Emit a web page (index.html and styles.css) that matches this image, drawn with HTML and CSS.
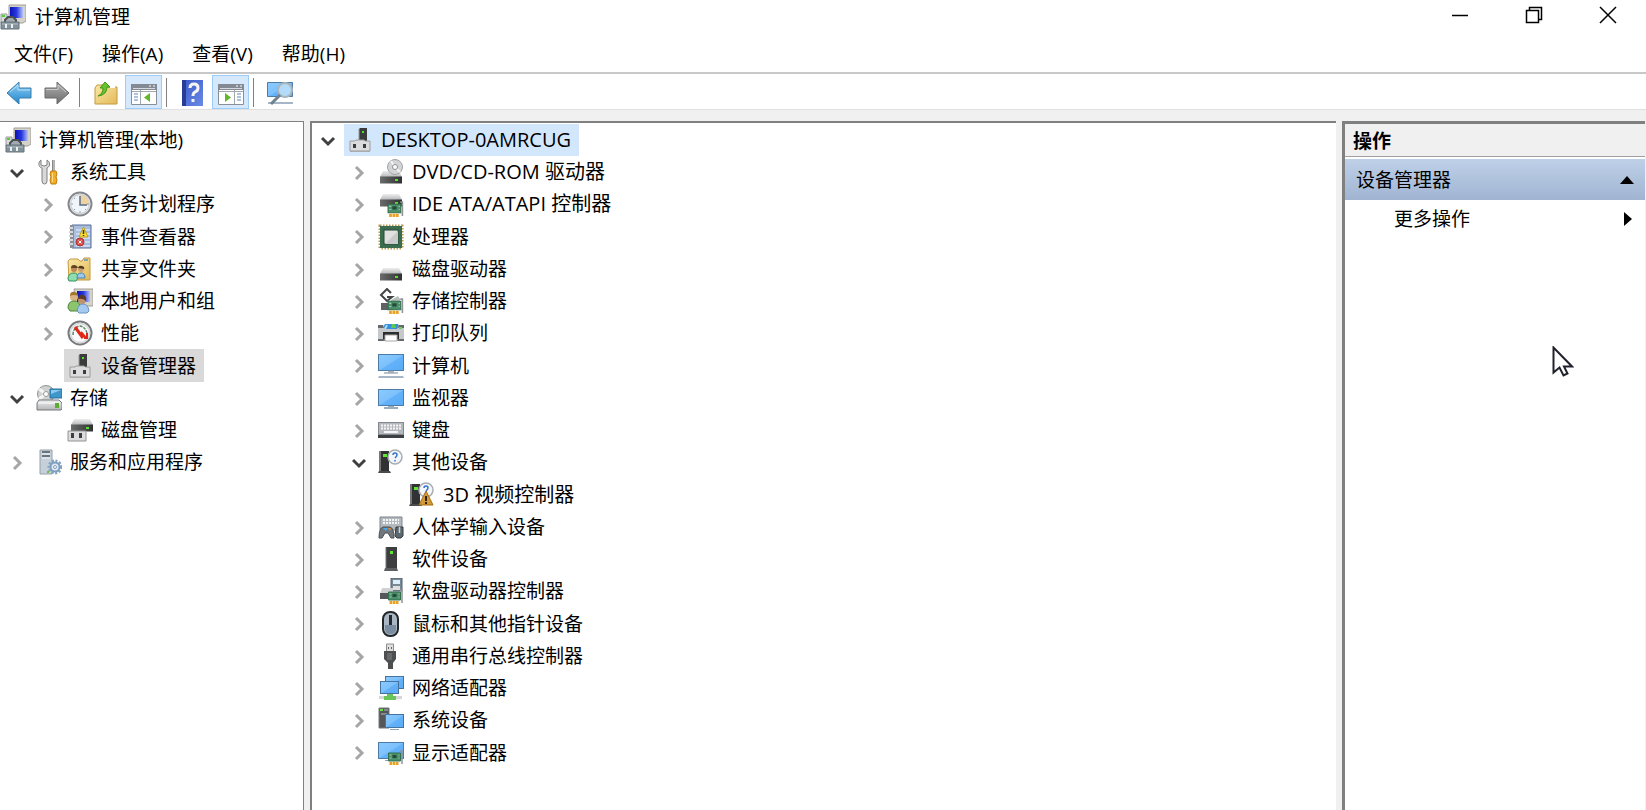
FILE: index.html
```html
<!DOCTYPE html>
<html lang="zh-CN">
<head>
    <meta charset="UTF-8">
    <meta name="viewport" content="width=device-width, initial-scale=1.0">
    <title>计算机管理</title>
    <link rel="stylesheet" href="styles.css">
</head>
<body>
    <svg class="sprite" aria-hidden="true">
        <defs>
            <linearGradient id="g-screen" x1="0" y1="0" x2="1" y2="1">
                <stop offset="0" stop-color="#8ccbff"/><stop offset=".5" stop-color="#7cc0fb"/><stop offset=".52" stop-color="#63b2fa"/><stop offset="1" stop-color="#5aabf5"/>
            </linearGradient>
            <linearGradient id="g-crt" x1="0" y1="0" x2="1" y2="0">
                <stop offset="0" stop-color="#0a12b8"/><stop offset=".5" stop-color="#2a38dd"/><stop offset="1" stop-color="#b4c4fa"/>
            </linearGradient>
            <linearGradient id="g-metal" x1="0" y1="0" x2="0" y2="1">
                <stop offset="0" stop-color="#eeeeee"/><stop offset="1" stop-color="#b4b6b8"/>
            </linearGradient>
            <linearGradient id="g-dark" x1="0" y1="0" x2="1" y2="0">
                <stop offset="0" stop-color="#6a6c6c"/><stop offset="1" stop-color="#303232"/>
            </linearGradient>
            <linearGradient id="g-back" x1="0" y1="0" x2="0" y2="1">
                <stop offset="0" stop-color="#8fd0f5"/><stop offset="1" stop-color="#2286cc"/>
            </linearGradient>
            <linearGradient id="g-fwd" x1="0" y1="0" x2="0" y2="1">
                <stop offset="0" stop-color="#b0b0b0"/><stop offset="1" stop-color="#6c6c6c"/>
            </linearGradient>
            <linearGradient id="g-folder" x1="0" y1="0" x2="1" y2="1">
                <stop offset="0" stop-color="#fbe9a6"/><stop offset="1" stop-color="#e2b95a"/>
            </linearGradient>
            <linearGradient id="g-help" x1="0" y1="0" x2="1" y2="1">
                <stop offset="0" stop-color="#3a58c8"/><stop offset="1" stop-color="#6a8ae6"/>
            </linearGradient>
        </defs>

        <!-- parts shared between device icons -->
        <symbol id="p-drive" viewBox="0 0 22 13">
            <path d="M3 0h16l3 6H0z" fill="url(#g-metal)"/>
            <path d="M0 5.500h22V12.500H0z" fill="url(#g-dark)"/>
            <rect x="15" y="8" width="3" height="2" fill="#59e02a"/>
        </symbol>
        <symbol id="p-card" viewBox="0 0 16 15">
            <path d="M1 3h12v8H1z" fill="#4c8f6b" stroke="#33704f"/>
            <rect x="5" y="5" width="4" height="3" fill="#264a37"/>
            <path d="M2 5h2M2 8h2M11 5h1M11 8h1" stroke="#9ad0b0"/>
            <path d="M2 12h9v3H2z" fill="#e9a02b"/>
            <path d="M5 12v3M8 12v3" stroke="#ffd77c"/>
            <path d="M12.500 1h2v13" fill="none" stroke="#909496" stroke-width="1.500"/>
        </symbol>
        <symbol id="p-box" viewBox="0 0 22 13">
            <path d="M1 2h5l1-1h8l1 1h5v10H1z" fill="#dcdcde" stroke="#9a9c9e"/>
            <path d="M1 12.500h20" stroke="#a9abad"/>
            <path d="M4 5h3v4H4zM14 5h3v4h-3z" fill="#3a3c3e"/>
        </symbol>

        <symbol id="i-mgmt" viewBox="0 0 26 26">
            <path d="M9 1h17v16l-3 2H9z" fill="#d5d3c9" stroke="#a09e96"/>
            <path d="M10 3h13v11H10z" fill="url(#g-crt)"/>
            <path d="M1 10h6v9H1z" fill="#d8dadb" stroke="#989a9a"/>
            <rect x="2" y="11" width="3" height="2" fill="#4fcf39"/>
            <path d="M5 18v-2l3-3h5l3 3v2" fill="#a4abb0" stroke="#4a5054" stroke-width="2"/>
            <path d="M1 18h18v7H1z" fill="#82919a" stroke="#66747c"/>
            <path d="M2 20h16" stroke="#b4c0c6"/>
            <path d="M6 20v4M12 20v4" stroke="#eef1f2" stroke-width="2"/>
        </symbol>
        <symbol id="i-tools" viewBox="0 0 26 26">
            <path d="M5 1c-3 2-3 7 1 8v13q0 3 2.500 3t2.500-3V9c4-2 3-6 0-8v5l-3 1-3-1z" fill="#d9d9d9" stroke="#808080"/>
            <path d="M17.500 1v12" stroke="#888" stroke-width="3"/>
            <path d="M18 1v11" stroke="#e0e0e0"/>
            <path d="M15 12h5l1 3-1 3 1 3-1 4h-5l-1-4 1-3-1-3z" fill="#f3ae23" stroke="#c27d10"/>
            <path d="M16.500 14v9" stroke="#ffe08a"/>
        </symbol>
        <symbol id="i-clock" viewBox="0 0 26 26">
            <circle cx="13" cy="13" r="11.500" fill="#f0f4fb" stroke="#85878a" stroke-width="2"/>
            <circle cx="13" cy="13" r="9.500" fill="none" stroke="#d0d3d7" stroke-width="1.500"/>
            <path d="M13 4a9 9 0 0 1 9 10h-9z" fill="#eed2a0"/>
            <path d="M13 5v9h7" fill="none" stroke="#5b6f8c" stroke-width="1.500"/>
            <path d="M13 20v2M4 13h2M20 13h2M7 19l1-1M19 19l-1-1M7 7l1 1" stroke="#94a2b5"/>
        </symbol>
        <symbol id="i-event" viewBox="0 0 26 26">
            <path d="M5 1h19v23H5z" fill="#a9bfe0" stroke="#546a96"/>
            <path d="M3 1h4v23H3z" fill="#8a8f98"/>
            <path d="M2 4h4M2 8h4M2 12h4M2 16h4M2 20h4" stroke="#d6d8dc" stroke-width="2"/>
            <path d="M9 6h14M9 10h14M9 14h14M9 18h14M9 22h14" stroke="#edf2fa"/>
            <path d="M16.500 3l4.500 10h-9z" fill="#f9dc3a" stroke="#c4a210"/>
            <path d="M16.500 6v4M16.500 11v1" stroke="#333" stroke-width="1.500"/>
            <circle cx="13" cy="18" r="4" fill="#d94b48" stroke="#b13531"/>
            <path d="M11.500 16.500l3 3M14.500 16.500l-3 3" stroke="#fff"/>
        </symbol>
        <symbol id="i-shared" viewBox="0 0 26 26">
            <path d="M1 5l2-2h8l2 2h2l2-3h6v22H2z" fill="url(#g-folder)" stroke="#c49a42"/>
            <path d="M17 4h4" stroke="#5896d0" stroke-width="1.500"/>
            <circle cx="7" cy="13" r="3" fill="#bd8853"/><path d="M4 12q0-3 3-3t4 3z" fill="#604224"/>
            <circle cx="14" cy="13" r="3" fill="#c8a273"/><path d="M11 12q1-3 4-2t2 3z" fill="#50391f"/>
            <path d="M1 23q0-6 6-6 4 0 4 5l-2 3H2z" fill="#8fdcae" stroke="#36915c"/>
            <path d="M10 22q0-5 4-5t4 5z" fill="#9fc9ec" stroke="#4b81b0"/>
        </symbol>
        <symbol id="i-users" viewBox="0 0 26 26">
            <path d="M7 1h19v17H9z" fill="#d5d3c9" stroke="#a09e96"/>
            <path d="M10 3h13v11H10z" fill="url(#g-crt)"/>
            <circle cx="7" cy="9" r="4" fill="#dab581"/><path d="M3 8q0-5 5-4 3 1 3 4-4-2-8 0z" fill="#a4772f"/>
            <path d="M1 20q0-7 6-7t6 7l-2 3H3z" fill="#8cc46f" stroke="#4c8635"/>
            <circle cx="15" cy="12" r="4" fill="#c19169"/><path d="M11 11q1-5 5-4t3 6q-3-3-8-2z" fill="#5d3a22"/>
            <path d="M10 23q1-7 6-7t6 7l-2 2h-8z" fill="#a5c9ef" stroke="#6794c3"/>
        </symbol>
        <symbol id="i-perf" viewBox="0 0 26 26">
            <circle cx="13" cy="13" r="11.500" fill="#fafafa" stroke="#77797b" stroke-width="2"/>
            <circle cx="13" cy="13" r="9.500" fill="none" stroke="#d6d8d9" stroke-width="1.500"/>
            <path d="M6 15q0-7 6-9 6 0 8 7" fill="none" stroke="#5e856c" stroke-width="1.500" stroke-dasharray="3 1"/>
            <path d="M8 7l8 11" fill="none" stroke="#e02818" stroke-width="3"/>
            <path d="M14 12l5 6M20 13v5h-3" fill="none" stroke="#e02818" stroke-width="2"/>
        </symbol>
        <symbol id="i-device" viewBox="0 0 26 26">
            <path d="M12 2l1-1h7v13h-8z" fill="#3a3c3c"/>
            <path d="M12 2v12" stroke="#999"/>
            <rect x="15" y="4" width="2" height="2" fill="#58df2c"/>
            <use href="#p-box" x="2" y="12" width="22" height="13"/>
        </symbol>
        <symbol id="i-storage" viewBox="0 0 26 26">
            <circle cx="10" cy="9" r="8.500" fill="#cfd2d2" stroke="#919494"/>
            <path d="M10 9L3 4M10 9l-7 5" stroke="#f4f5f5" stroke-width="3"/>
            <circle cx="10" cy="9" r="2.500" fill="#fff" stroke="#999"/>
            <path d="M14 4h12v9H14z" fill="#3e96cb" stroke="#26709f"/>
            <path d="M15 5h10l-10 4z" fill="#8fcaec"/>
            <path d="M3 15h20l3 3v6l-1 1H1v-7z" fill="url(#g-metal)" stroke="#77797a"/>
            <path d="M2 18h22" stroke="#fff"/>
            <rect x="19" y="18" width="4" height="5" fill="#5bac33"/>
        </symbol>
        <symbol id="i-diskmgmt" viewBox="0 0 26 26">
            <use href="#p-drive" x="4" y="2" width="22" height="13"/>
            <path d="M1 14h18v10H1z" fill="#dcdcde" stroke="#929496"/>
            <path d="M4 16h3v5H4zM12 16h3v5h-3z" fill="#3c3e40"/>
        </symbol>
        <symbol id="i-services" viewBox="0 0 26 26">
            <path d="M4 1h12v24H4z" fill="#c6d0d8" stroke="#94a0a9"/>
            <path d="M6 3h8M6 7h8" stroke="#4a545c" stroke-width="1.500"/>
            <path d="M6 5h8M6 9h8" stroke="#f1f4f6"/>
            <circle cx="19" cy="18" r="6" fill="none" stroke="#84a4c3" stroke-width="3" stroke-dasharray="2 1.500"/>
            <circle cx="19" cy="18" r="4.500" fill="#e1eaf3" stroke="#7f9fbf" stroke-width="2"/>
            <circle cx="19" cy="18" r="1.500" fill="#fff" stroke="#7f9fbf"/>
            <path d="M11 22h2v2h-2z" fill="#72c045"/>
        </symbol>
        <symbol id="i-dvd" viewBox="0 0 26 26">
            <use href="#p-drive" x="2" y="12" width="22" height="13"/>
            <circle cx="17" cy="8" r="7.500" fill="#d2d4d5" stroke="#a0a2a4"/>
            <path d="M17 8L13 2M17 8l5 5" stroke="#f3f3f3" stroke-width="2"/>
            <circle cx="17" cy="8" r="2.500" fill="#fff" stroke="#8c8e90"/>
        </symbol>
        <symbol id="i-ide" viewBox="0 0 26 26">
            <use href="#p-drive" x="2" y="3" width="22" height="13"/>
            <use href="#p-card" x="9" y="10" width="17" height="16"/>
        </symbol>
        <symbol id="i-cpu" viewBox="0 0 26 26">
            <rect x="2" y="2" width="22" height="22" fill="none" stroke="#b89a50" stroke-width="3" stroke-dasharray="1.500 1.500"/>
            <rect x="2" y="2" width="22" height="22" fill="#3b6c50"/>
            <rect x="6" y="6" width="14" height="14" fill="#e0e0e0" stroke="#264b36"/>
            <path d="M7 20L20 7v13z" fill="#cacaca"/>
        </symbol>
        <symbol id="i-disk" viewBox="0 0 26 26">
            <use href="#p-drive" x="2" y="12" width="22" height="13"/>
        </symbol>
        <symbol id="i-storctl" viewBox="0 0 26 26">
            <path d="M13 5L9 1 3 7l6 6 5-4H9" fill="none" stroke="#424446" stroke-width="2"/>
            <path d="M3 15h8l4 2v5H3z" fill="#5f6264"/>
            <path d="M13 12l7-4 2 3v4h-9z" fill="#b8c0bc"/>
            <use href="#p-card" x="9" y="10" width="17" height="16"/>
        </symbol>
        <symbol id="i-printer" viewBox="0 0 26 26">
            <path d="M7 4h13l3 5H4z" fill="#3a8cdc"/>
            <path d="M14 4h3l1 4h-5z" fill="#59cb53"/>
            <path d="M9 5l-2 4" stroke="#9fe1fb" stroke-width="2"/>
            <path d="M0 5h5l2 4h12l2-4h5v16H0z" fill="#c5c9cb"/>
            <path d="M0 8V5h5l1 3M26 8V5h-5l-1 3M0 19h26v2H0z" fill="#66696b"/>
            <path d="M5 12h16v7H5z" fill="#2b2d2e"/>
            <path d="M7 15h12v6H7z" fill="#fff" stroke="#aaa"/>
            <rect x="21" y="7" width="3" height="2" fill="#65d850"/>
        </symbol>
        <symbol id="i-computer" viewBox="0 0 26 26">
            <rect x=".5" y="1.500" width="25" height="16" fill="url(#g-screen)" stroke="#4d7ca8"/>
            <path d="M6 20h14M10 18.500h6" stroke="#a4b0ba" stroke-width="1.500"/>
            <path d="M1 23h24l1 2H0z" fill="#a6b6c6"/>
        </symbol>
        <symbol id="i-monitor" viewBox="0 0 26 26">
            <rect x=".5" y="4.500" width="25" height="16" fill="url(#g-screen)" stroke="#4d7ca8"/>
            <path d="M10 21h6v1h4v2H6v-2h4z" fill="#9baebe"/>
        </symbol>
        <symbol id="i-keyboard" viewBox="0 0 26 26">
            <rect x=".5" y="5.500" width="25" height="12" fill="#b4b8bd" stroke="#858a90"/>
            <path d="M3 8.500h20M3 11.500h20" stroke="#f5f5f5" stroke-width="2" stroke-dasharray="2 1"/>
            <path d="M6 15h14" stroke="#f5f5f5" stroke-width="2"/>
            <path d="M0 18h26v3H0z" fill="#3d4042"/>
        </symbol>
        <symbol id="i-unknown" viewBox="0 0 26 26">
            <path d="M2 2h9v20H2z" fill="#303234"/><path d="M2 2v20" stroke="#777" stroke-width="2"/>
            <path d="M1 22h11l1 2H0z" fill="#494b4c"/>
            <rect x="5" y="5" width="4" height="3" fill="#5fe534"/>
            <circle cx="17" cy="8" r="7" fill="#f3f6fa" stroke="#a9adb2" stroke-width="1.500"/>
            <path d="M15 6q0-2 2-2t2 2q0 1-2 3M17 11v1.500" fill="none" stroke="#3274c3" stroke-width="1.500"/>
        </symbol>
        <symbol id="i-warning" viewBox="0 0 26 26">
            <use href="#i-unknown" width="26" height="26"/>
            <path d="M17 9l7 14H10z" fill="#d49a38" stroke="#a36c14"/>
            <path d="M17 14v5M17 20v2" stroke="#2d2210" stroke-width="2"/>
        </symbol>
        <symbol id="i-hid" viewBox="0 0 26 26">
            <path d="M2 3h22v13H2z" fill="#b4b9be" stroke="#80868b"/>
            <path d="M5 6h16M5 9h16" stroke="#f4f4f4" stroke-width="2" stroke-dasharray="2 1"/>
            <path d="M1 24q0-10 4-11h7q4 1 4 11h-3l-3-5H7l-3 5z" fill="#70777d" stroke="#4b5155"/>
            <path d="M5 14h5l-2 3z" fill="#44aaf2"/><path d="M10 14h3l-1 3z" fill="#e58933"/>
            <path d="M18 13h7v9l-2 2h-4l-2-2z" fill="#5b6870" stroke="#343c42"/>
            <path d="M21.500 13v6" stroke="#d0d4d8" stroke-width="1.500"/>
        </symbol>
        <symbol id="i-software" viewBox="0 0 26 26">
            <path d="M8 1h11v21H8z" fill="#3c3e40"/><path d="M8 1v21" stroke="#777"/>
            <path d="M7 22h12l1 3H6z" fill="#5c5e60"/>
            <rect x="12" y="5" width="3" height="3" fill="#5fe534"/>
        </symbol>
        <symbol id="i-floppy" viewBox="0 0 26 26">
            <path d="M13 0h11v13H13z" fill="#788896" stroke="#54616c"/>
            <path d="M15 2h7v4h-7z" fill="#dcf0fb"/><path d="M15 8h7v4h-7z" fill="#dedede"/>
            <path d="M4 10h11v6H2z" fill="#cfd1d2"/><path d="M2 15h13v6H2z" fill="#55585a"/>
            <use href="#p-card" x="9" y="11" width="17" height="15"/>
        </symbol>
        <symbol id="i-mouse" viewBox="0 0 26 26">
            <rect x="5" y="1" width="15" height="24" rx="7" fill="#a9b6c3" stroke="#232628" stroke-width="2"/>
            <path d="M7 14h11v4q0 5-5.500 5T7 18z" fill="#7a8c9f"/>
            <path d="M12.500 4v10" stroke="#26292c" stroke-width="3"/>
        </symbol>
        <symbol id="i-usb" viewBox="0 0 26 26">
            <path d="M8.500 1h7v8h-7z" fill="#dfdfdf" stroke="#8c8e8e"/>
            <path d="M10 4h1v2h-1zM13 4h1v2h-1z" fill="#666"/>
            <path d="M6 8h12v8l-3 4v6h-5v-6l-4-4z" fill="#4c4e50"/>
            <path d="M9 10h5v7H9z" fill="#66696b"/>
        </symbol>
        <symbol id="i-network" viewBox="0 0 26 26">
            <rect x="7.500" y="1.500" width="18" height="12" fill="url(#g-screen)" stroke="#44749f"/>
            <rect x="2.500" y="6.500" width="18" height="12" fill="url(#g-screen)" stroke="#44749f"/>
            <path d="M1 21h23v3H1z" fill="#d5d7d8"/>
            <path d="M9 19h6v2h3v4H6v-4h3z" fill="#69c459"/>
        </symbol>
        <symbol id="i-system" viewBox="0 0 26 26">
            <path d="M1 1h10v20H1z" fill="#53575a" stroke="#77797b"/>
            <path d="M6 3h4M3 7h6" stroke="#babcbe"/>
            <rect x="2" y="2" width="3" height="2" fill="#65e33a"/>
            <rect x="7.500" y="7.500" width="18" height="13" fill="url(#g-screen)" stroke="#44749f"/>
            <path d="M12 22h9v1h-9z" fill="#8ea4b8"/>
        </symbol>
        <symbol id="i-display" viewBox="0 0 26 26">
            <rect x=".5" y="2.500" width="25" height="16" fill="url(#g-screen)" stroke="#4d7ca8"/>
            <path d="M7 20h4v1H7z" fill="#8ea4b8"/>
            <use href="#p-card" x="9" y="10" width="17" height="15"/>
        </symbol>

        <!-- toolbar -->
        <symbol id="i-back" viewBox="0 0 26 26">
            <path d="M1 13L13 2v6h12v10H13v6z" fill="url(#g-back)" stroke="#3c7cab"/>
            <path d="M4 12l8-7v5h12" fill="none" stroke="#b6e2fa"/>
        </symbol>
        <symbol id="i-forward" viewBox="0 0 26 26">
            <path d="M25 13L13 2v6H1v10h12v6z" fill="url(#g-fwd)" stroke="#6a6a6a"/>
            <path d="M2 9.500h12V5l8 7" fill="none" stroke="#cacaca"/>
        </symbol>
        <symbol id="i-up" viewBox="0 0 26 26">
            <path d="M2 8l2-3h8l2 2h10v17H2z" fill="url(#g-folder)" stroke="#c49a42"/>
            <path d="M17 7h5" stroke="#fff" stroke-width="2"/>
            <path d="M5 16q5-2 5-8H7l5-6 5 5h-3q0 8-9 9z" fill="#65c32c" stroke="#419517"/>
        </symbol>
        <symbol id="p-pane" viewBox="0 0 26 26">
            <path d="M.500 4.500h25v20H.500z" fill="#fff" stroke="#888f98"/>
            <path d="M0 4h26v6H0z" fill="#838a94"/>
            <path d="M2 8.500h22" stroke="#d6dae0"/>
            <path d="M18 6h2M22 6h2" stroke="#fff"/>
        </symbol>
        <symbol id="i-tree-pane" viewBox="0 0 26 26">
            <use href="#p-pane" width="26" height="26"/>
            <path d="M9.500 10v14M1 11.500h24" stroke="#a2a8b0"/>
            <path d="M3 14h4M3 17h4M3 20h4" stroke="#5a85bd"/>
            <path d="M19 13v9l-6-4.500z" fill="#62b82d"/>
        </symbol>
        <symbol id="i-action-pane" viewBox="0 0 26 26">
            <use href="#p-pane" width="26" height="26"/>
            <path d="M16.500 10v14M1 11.500h24" stroke="#a2a8b0"/>
            <path d="M19 14h4M19 17h4M19 20h4" stroke="#5a85bd"/>
            <path d="M7 13v9l6-4.500z" fill="#62b82d"/>
        </symbol>
        <symbol id="i-help" viewBox="0 0 26 26">
            <path d="M2 0h21v26H2z" fill="url(#g-help)"/>
            <path d="M2 0h4v26H2z" fill="#263c98"/>
            <path d="M10 8q0-4 4-4t4 4q0 3-3 4-2 1-2 4M13 19v3" fill="none" stroke="#f4f4f4" stroke-width="3"/>
        </symbol>
        <symbol id="i-scan" viewBox="0 0 26 26">
            <path d="M.500 2.500h25v14H.500z" fill="url(#g-screen)" stroke="#4d7ca8"/>
            <path d="M1 22h25v2H1z" fill="#a6b6c6"/>
            <circle cx="18" cy="10" r="7" fill="#b2dcf9" stroke="#aab4bc" stroke-width="2"/>
            <path d="M13 15l-9 9" stroke="#6e8294" stroke-width="3"/>
        </symbol>

        <symbol id="i-open" viewBox="0 0 16 16"><path d="M1 5l6 6 6-6" fill="none" stroke="#404040" stroke-width="3"/></symbol>
        <symbol id="i-closed" viewBox="0 0 16 16"><path d="M4 2l6 6-6 6" fill="none" stroke="#a6a6a6" stroke-width="3"/></symbol>
    </svg>

    <div class="window">
        <header class="titlebar">
            <svg class="icon"><use href="#i-mgmt"/></svg>
            <h1>计算机管理</h1>
            <div class="window-buttons">
                <button aria-label="最小化"><svg viewBox="0 0 18 18"><path d="M1 9.500h16"/></svg></button>
                <button aria-label="还原"><svg viewBox="0 0 18 18"><path d="M1.500 4.500h12v12h-12zM4.500 4V1.500h12v12H14"/></svg></button>
                <button aria-label="关闭"><svg viewBox="0 0 18 18"><path d="M1 1l16 16M17 1L1 17"/></svg></button>
            </div>
        </header>

        <nav class="menubar">
            <button>文件(F)</button>
            <button>操作(A)</button>
            <button>查看(V)</button>
            <button>帮助(H)</button>
        </nav>

        <div class="toolbar">
            <button aria-label="后退"><svg class="icon"><use href="#i-back"/></svg></button>
            <button aria-label="前进"><svg class="icon"><use href="#i-forward"/></svg></button>
            <span class="separator"></span>
            <button aria-label="上一级"><svg class="icon"><use href="#i-up"/></svg></button>
            <button class="active" aria-label="显示/隐藏控制台树"><svg class="icon"><use href="#i-tree-pane"/></svg></button>
            <span class="separator"></span>
            <button aria-label="帮助"><svg class="icon"><use href="#i-help"/></svg></button>
            <button class="active" aria-label="显示/隐藏操作窗格"><svg class="icon"><use href="#i-action-pane"/></svg></button>
            <span class="separator"></span>
            <button aria-label="扫描检测硬件改动"><svg class="icon"><use href="#i-scan"/></svg></button>
        </div>

        <main class="panes">
            <section class="pane console">
                <ul class="tree" role="tree">
                    <li role="treeitem"><span class="label"><svg class="icon"><use href="#i-mgmt"/></svg>计算机管理(本地)</span></li>
                    <li role="treeitem"><button class="toggle" aria-label="折叠"><svg><use href="#i-open"/></svg></button><span class="label"><svg class="icon"><use href="#i-tools"/></svg>系统工具</span></li>
                    <li role="treeitem" class="level-2"><button class="toggle" aria-label="展开"><svg><use href="#i-closed"/></svg></button><span class="label"><svg class="icon"><use href="#i-clock"/></svg>任务计划程序</span></li>
                    <li role="treeitem" class="level-2"><button class="toggle" aria-label="展开"><svg><use href="#i-closed"/></svg></button><span class="label"><svg class="icon"><use href="#i-event"/></svg>事件查看器</span></li>
                    <li role="treeitem" class="level-2"><button class="toggle" aria-label="展开"><svg><use href="#i-closed"/></svg></button><span class="label"><svg class="icon"><use href="#i-shared"/></svg>共享文件夹</span></li>
                    <li role="treeitem" class="level-2"><button class="toggle" aria-label="展开"><svg><use href="#i-closed"/></svg></button><span class="label"><svg class="icon"><use href="#i-users"/></svg>本地用户和组</span></li>
                    <li role="treeitem" class="level-2"><button class="toggle" aria-label="展开"><svg><use href="#i-closed"/></svg></button><span class="label"><svg class="icon"><use href="#i-perf"/></svg>性能</span></li>
                    <li role="treeitem" class="level-3" aria-selected="true"><span class="label current"><svg class="icon"><use href="#i-device"/></svg>设备管理器</span></li>
                    <li role="treeitem"><button class="toggle" aria-label="折叠"><svg><use href="#i-open"/></svg></button><span class="label"><svg class="icon"><use href="#i-storage"/></svg>存储</span></li>
                    <li role="treeitem" class="level-3"><span class="label"><svg class="icon"><use href="#i-diskmgmt"/></svg>磁盘管理</span></li>
                    <li role="treeitem"><button class="toggle" aria-label="展开"><svg><use href="#i-closed"/></svg></button><span class="label"><svg class="icon"><use href="#i-services"/></svg>服务和应用程序</span></li>
                </ul>
            </section>

            <section class="pane devices">
                <ul class="tree" role="tree">
                    <li role="treeitem" class="latin" aria-selected="true"><button class="toggle" aria-label="折叠"><svg><use href="#i-open"/></svg></button><span class="label selected"><svg class="icon"><use href="#i-device"/></svg>DESKTOP-0AMRCUG</span></li>
                    <li role="treeitem" class="level-2 latin"><button class="toggle" aria-label="展开"><svg><use href="#i-closed"/></svg></button><span class="label"><svg class="icon"><use href="#i-dvd"/></svg>DVD/CD-ROM 驱动器</span></li>
                    <li role="treeitem" class="level-2 latin"><button class="toggle" aria-label="展开"><svg><use href="#i-closed"/></svg></button><span class="label"><svg class="icon"><use href="#i-ide"/></svg>IDE ATA/ATAPI 控制器</span></li>
                    <li role="treeitem" class="level-2"><button class="toggle" aria-label="展开"><svg><use href="#i-closed"/></svg></button><span class="label"><svg class="icon"><use href="#i-cpu"/></svg>处理器</span></li>
                    <li role="treeitem" class="level-2"><button class="toggle" aria-label="展开"><svg><use href="#i-closed"/></svg></button><span class="label"><svg class="icon"><use href="#i-disk"/></svg>磁盘驱动器</span></li>
                    <li role="treeitem" class="level-2"><button class="toggle" aria-label="展开"><svg><use href="#i-closed"/></svg></button><span class="label"><svg class="icon"><use href="#i-storctl"/></svg>存储控制器</span></li>
                    <li role="treeitem" class="level-2"><button class="toggle" aria-label="展开"><svg><use href="#i-closed"/></svg></button><span class="label"><svg class="icon"><use href="#i-printer"/></svg>打印队列</span></li>
                    <li role="treeitem" class="level-2"><button class="toggle" aria-label="展开"><svg><use href="#i-closed"/></svg></button><span class="label"><svg class="icon"><use href="#i-computer"/></svg>计算机</span></li>
                    <li role="treeitem" class="level-2"><button class="toggle" aria-label="展开"><svg><use href="#i-closed"/></svg></button><span class="label"><svg class="icon"><use href="#i-monitor"/></svg>监视器</span></li>
                    <li role="treeitem" class="level-2"><button class="toggle" aria-label="展开"><svg><use href="#i-closed"/></svg></button><span class="label"><svg class="icon"><use href="#i-keyboard"/></svg>键盘</span></li>
                    <li role="treeitem" class="level-2"><button class="toggle" aria-label="折叠"><svg><use href="#i-open"/></svg></button><span class="label"><svg class="icon"><use href="#i-unknown"/></svg>其他设备</span></li>
                    <li role="treeitem" class="level-4 latin"><span class="label"><svg class="icon"><use href="#i-warning"/></svg>3D 视频控制器</span></li>
                    <li role="treeitem" class="level-2"><button class="toggle" aria-label="展开"><svg><use href="#i-closed"/></svg></button><span class="label"><svg class="icon"><use href="#i-hid"/></svg>人体学输入设备</span></li>
                    <li role="treeitem" class="level-2"><button class="toggle" aria-label="展开"><svg><use href="#i-closed"/></svg></button><span class="label"><svg class="icon"><use href="#i-software"/></svg>软件设备</span></li>
                    <li role="treeitem" class="level-2"><button class="toggle" aria-label="展开"><svg><use href="#i-closed"/></svg></button><span class="label"><svg class="icon"><use href="#i-floppy"/></svg>软盘驱动器控制器</span></li>
                    <li role="treeitem" class="level-2"><button class="toggle" aria-label="展开"><svg><use href="#i-closed"/></svg></button><span class="label"><svg class="icon"><use href="#i-mouse"/></svg>鼠标和其他指针设备</span></li>
                    <li role="treeitem" class="level-2"><button class="toggle" aria-label="展开"><svg><use href="#i-closed"/></svg></button><span class="label"><svg class="icon"><use href="#i-usb"/></svg>通用串行总线控制器</span></li>
                    <li role="treeitem" class="level-2"><button class="toggle" aria-label="展开"><svg><use href="#i-closed"/></svg></button><span class="label"><svg class="icon"><use href="#i-network"/></svg>网络适配器</span></li>
                    <li role="treeitem" class="level-2"><button class="toggle" aria-label="展开"><svg><use href="#i-closed"/></svg></button><span class="label"><svg class="icon"><use href="#i-system"/></svg>系统设备</span></li>
                    <li role="treeitem" class="level-2"><button class="toggle" aria-label="展开"><svg><use href="#i-closed"/></svg></button><span class="label"><svg class="icon"><use href="#i-display"/></svg>显示适配器</span></li>
                </ul>
            </section>

            <aside class="pane actions">
                <h2>操作</h2>
                <button class="group">设备管理器<svg viewBox="0 0 16 16"><path d="M1 12l7-8 7 8z"/></svg></button>
                <button class="more">更多操作<svg viewBox="0 0 16 16"><path d="M5 1l8 7-8 7z"/></svg></button>
                <svg class="cursor" viewBox="0 0 22 32"><path d="M1.500 1.500v25l6-5 4 8 4-2-3.500-7h8z"/></svg>
            </aside>
        </main>
    </div>
</body>
</html>
```
FILE: styles.css
```css
:root {
    --face: #f0f0f0;
    --line: #c8c8c8;
    --shadow: #808080;
    --select: #d3e7fc;
}
* {
    box-sizing: border-box;
}
body {
    margin: 0;
    font-family: "Open Sans", "Noto Sans CJK SC", sans-serif;
    font-size: 19px;
    line-height: 24px;
    color: #000;
    background: #fff;
}
button {
    border: none;
    padding: 0;
    background: transparent;
    font: inherit;
    color: inherit;
}
.sprite {
    position: absolute;
    width: 0;
    height: 0;
}
.icon {
    width: 26px;
    height: 26px;
    flex: none;
}
.window {
    display: flex;
    flex-direction: column;
    min-height: 100vh;
}
.titlebar {
    display: flex;
    align-items: center;
    height: 34px;
    padding-right: 1px;
}
.titlebar h1 {
    margin: 0 0 0 9px;
    font-size: 19px;
    font-weight: 400;
}
.window-buttons {
    display: flex;
    margin-left: auto;
    align-self: flex-start;
}
.window-buttons button {
    width: 74px;
    height: 29px;
}
.window-buttons svg {
    display: block;
    width: 18px;
    height: 18px;
    margin: auto;
    fill: none;
    stroke: #000;
    stroke-width: 1.5;
}
.menubar {
    display: flex;
    gap: 1px;
    padding-top: 2px;
    height: 40px;
    border-bottom: 2px solid var(--line);
}
.menubar button {
    padding: 0 14px;
}
.toolbar {
    display: flex;
    align-items: center;
    gap: 1px;
    height: 36px;
    padding-top: 1px;
    border-bottom: 1px solid #e0e0e0;
}
.toolbar button {
    display: flex;
    align-items: center;
    justify-content: center;
    width: 37px;
    height: 34px;
    padding-top: 2px;
    border: 1px solid transparent;
}
.toolbar .active {
    background: #d5e8fc;
    border-color: #9ccdf8;
}
.separator {
    width: 1px;
    height: 29px;
    margin: 0 6px 0 3px;
    background: var(--shadow);
}
.panes {
    display: flex;
    flex: 1;
    gap: 6px;
    padding: 11px 1px 0 0;
    background: var(--face);
}
.pane {
    background: #fff;
}
.console {
    width: 304px;
    padding: 2px 0 0 2px;
    border-top: 1px solid var(--shadow);
    border-right: 1px solid var(--shadow);
}
.devices {
    flex: 1;
    padding: 1px 0 0 1px;
    border-top: 2px solid var(--shadow);
    border-left: 2px solid var(--shadow);
}
.actions {
    position: relative;
    width: 303px;
    border-top: 3px solid var(--shadow);
    border-left: 3px solid var(--shadow);
}
.tree {
    list-style: none;
    margin: 0;
    padding: 0;
}
.tree li {
    display: flex;
    height: 32px;
}
.tree li:nth-child(4n) {
    height: 33px;
}
.tree .level-2 {
    padding-left: 31px;
}
.tree .level-3 {
    padding-left: 62px;
}
.tree .level-4 {
    padding-left: 93px;
}
.toggle {
    width: 31px;
    padding-top: 1px;
}
.toggle svg {
    display: block;
    width: 16px;
    height: 16px;
    margin: auto;
}
.label {
    display: flex;
    align-items: center;
    gap: 8px;
    padding: 0 8px 0 3px;
    white-space: nowrap;
}
.latin {
    font-size: 20px;
}
.current {
    background: #d9d9d9;
}
.selected {
    background: var(--select);
}
.actions h2 {
    margin: 0;
    padding: 5px 8px 0;
    height: 33px;
    font-size: 19px;
    font-weight: 700;
    background: var(--face);
    border-bottom: 1px solid #a0a0a0;
}
.actions button {
    display: flex;
    align-items: center;
    justify-content: space-between;
    width: 100%;
    padding-right: 10px;
}
.actions button svg {
    width: 16px;
    height: 16px;
}
.group {
    height: 41px;
    margin-top: 2px;
    padding-left: 11px;
    background: linear-gradient(#bfd1e8, #a0b4d2);
}
.more {
    height: 38px;
    padding-left: 49px;
}
.cursor {
    position: absolute;
    top: 222px;
    right: 71px;
    width: 22px;
    height: 32px;
    fill: #fff;
    stroke: #22222c;
    stroke-width: 2px;
}
```
